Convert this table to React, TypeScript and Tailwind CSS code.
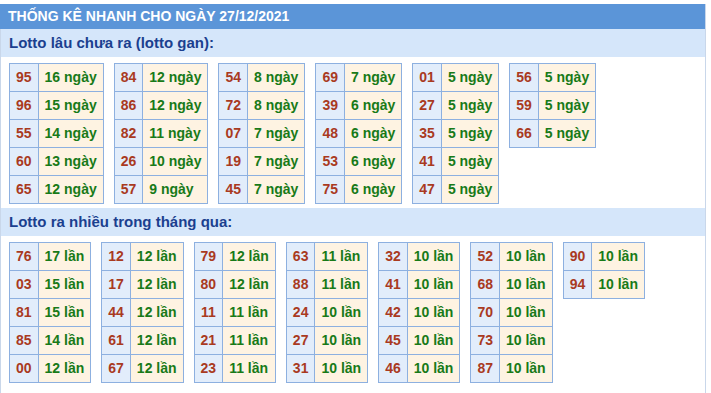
import React from 'react';

type Cell = [string, string];

const ganTables: Cell[][] = [
  [['95', '16 ngày'], ['96', '15 ngày'], ['55', '14 ngày'], ['60', '13 ngày'], ['65', '12 ngày']],
  [['84', '12 ngày'], ['86', '12 ngày'], ['82', '11 ngày'], ['26', '10 ngày'], ['57', '9 ngày']],
  [['54', '8 ngày'], ['72', '8 ngày'], ['07', '7 ngày'], ['19', '7 ngày'], ['45', '7 ngày']],
  [['69', '7 ngày'], ['39', '6 ngày'], ['48', '6 ngày'], ['53', '6 ngày'], ['75', '6 ngày']],
  [['01', '5 ngày'], ['27', '5 ngày'], ['35', '5 ngày'], ['41', '5 ngày'], ['47', '5 ngày']],
  [['56', '5 ngày'], ['59', '5 ngày'], ['66', '5 ngày']],
];

const hotTables: Cell[][] = [
  [['76', '17 lần'], ['03', '15 lần'], ['81', '15 lần'], ['85', '14 lần'], ['00', '12 lần']],
  [['12', '12 lần'], ['17', '12 lần'], ['44', '12 lần'], ['61', '12 lần'], ['67', '12 lần']],
  [['79', '12 lần'], ['80', '12 lần'], ['11', '11 lần'], ['21', '11 lần'], ['23', '11 lần']],
  [['63', '11 lần'], ['88', '11 lần'], ['24', '10 lần'], ['27', '10 lần'], ['31', '10 lần']],
  [['32', '10 lần'], ['41', '10 lần'], ['42', '10 lần'], ['45', '10 lần'], ['46', '10 lần']],
  [['52', '10 lần'], ['68', '10 lần'], ['70', '10 lần'], ['73', '10 lần'], ['87', '10 lần']],
  [['90', '10 lần'], ['94', '10 lần']],
];

const StatTable: React.FC<{ rows: Cell[] }> = ({ rows }) => (
  <div className="grid grid-cols-[auto_auto] self-start border-l border-t border-[#8db0e0]">
    {rows.map(([num, val]) => (
      <React.Fragment key={num}>
        <div className="flex h-[28px] items-center justify-center border-b border-r border-[#8db0e0] bg-[#e2edfb] px-[6px] text-[#a93a1f]">
          {num}
        </div>
        <div className="flex h-[28px] items-center border-b border-r border-[#8db0e0] bg-[#fef3e2] px-[6px] text-[#187a18]">
          {val}
        </div>
      </React.Fragment>
    ))}
  </div>
);

const SectionTitle: React.FC<{ children: React.ReactNode }> = ({ children }) => (
  <div className="flex h-[28px] items-center bg-[#d5e6fa] px-[8px] text-[15px] font-bold text-[#1b3f8f]">
    {children}
  </div>
);

export default function App() {
  return (
    <div className="h-[393px] w-[711px] overflow-hidden bg-white pt-[4px] font-['Liberation_Sans',Arial,sans-serif]">
      <div className="h-[389px] w-[706px] border-r border-l border-[#c9d7ea]">
        <div className="-ml-px flex h-[25px] items-center bg-[#5b95d8] px-[8px] text-[14px] font-bold text-white">
          THỐNG KÊ NHANH CHO NGÀY 27/12/2021
        </div>
        <SectionTitle>Lotto lâu chưa ra (lotto gan):</SectionTitle>
        <div className="flex gap-[10px] pb-[4px] pl-[8px] pt-[6px] text-[14px] font-bold">
          {ganTables.map((t, i) => (
            <StatTable key={i} rows={t} />
          ))}
        </div>
        <SectionTitle>Lotto ra nhiều trong tháng qua:</SectionTitle>
        <div className="flex gap-[10px] pl-[8px] pt-[6px] text-[14px] font-bold">
          {hotTables.map((t, i) => (
            <StatTable key={i} rows={t} />
          ))}
        </div>
      </div>
    </div>
  );
}
